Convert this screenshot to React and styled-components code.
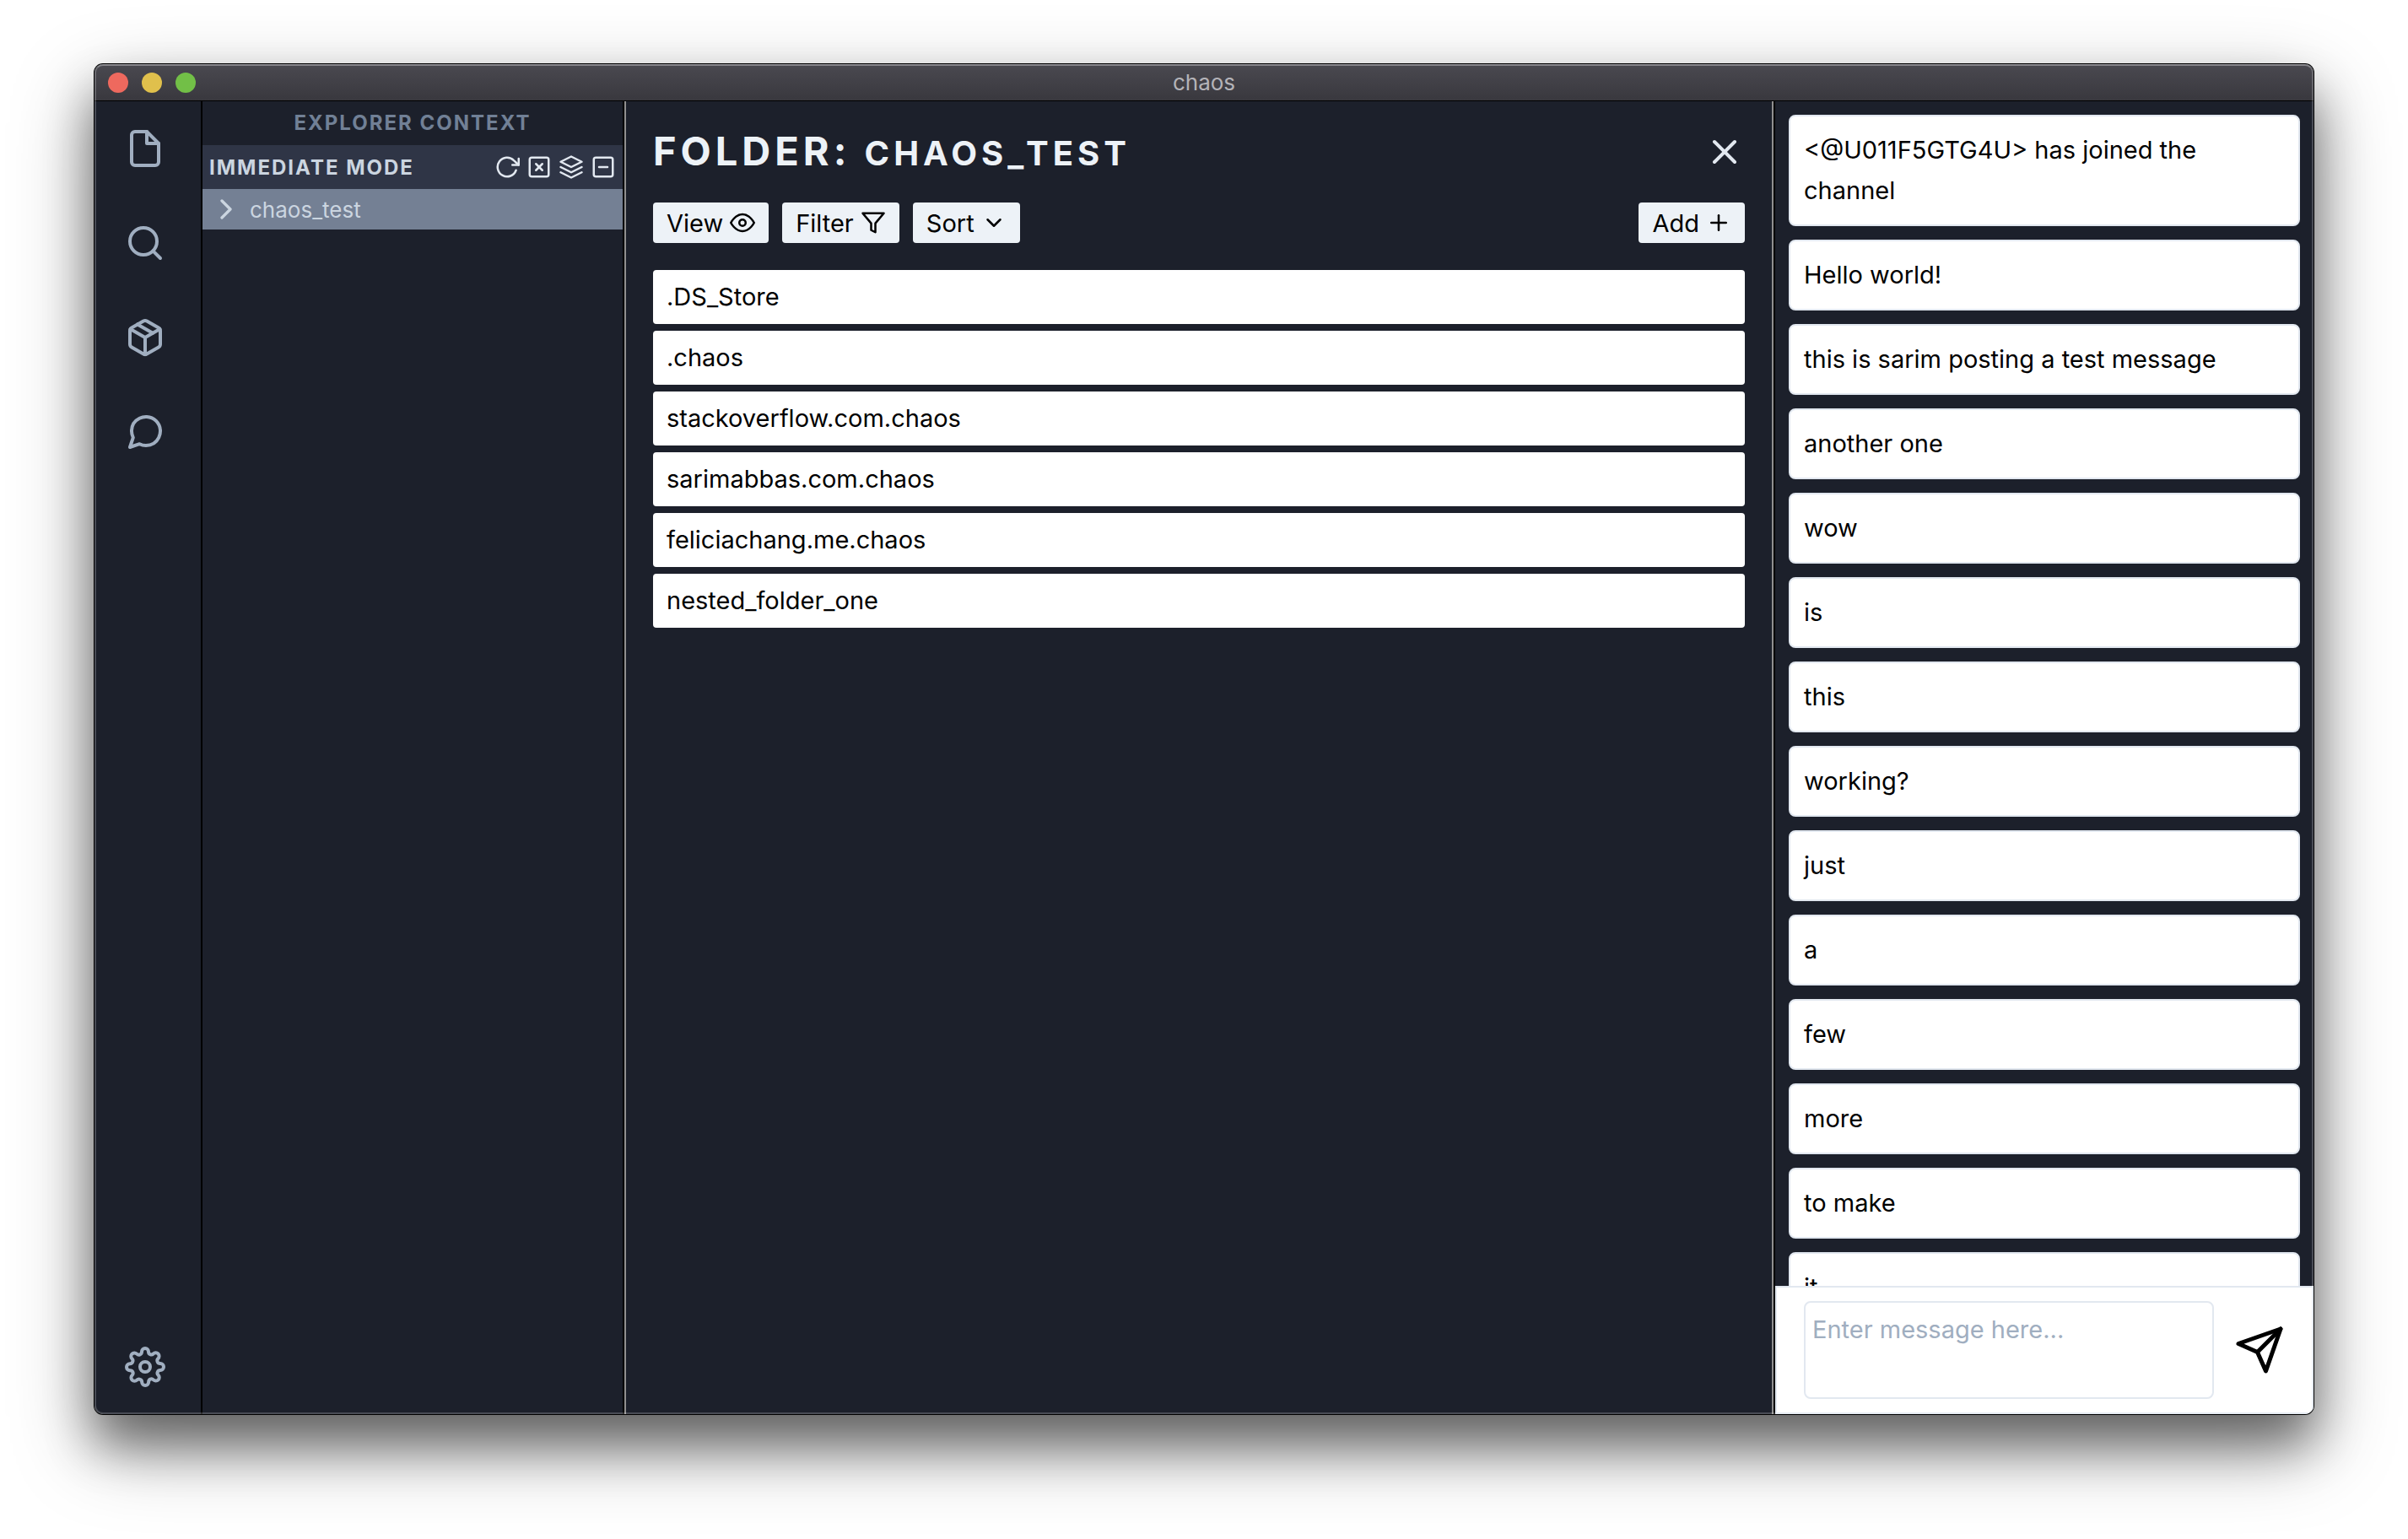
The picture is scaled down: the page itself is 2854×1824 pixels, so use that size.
import React from 'react';
import styled, { createGlobalStyle } from 'styled-components';
import {
  FiFile, FiSearch, FiPackage, FiMessageCircle, FiSettings, FiX, FiSend, FiRotateCw,
  FiXSquare, FiLayers, FiMinusSquare, FiChevronRight, FiChevronDown, FiEye, FiFilter, FiPlus,
} from 'react-icons/fi';

const Global = createGlobalStyle`
  *, *::before, *::after { box-sizing: border-box; }
  body { margin: 0; background: #fff; font-family: Inter, "Liberation Sans", sans-serif; }
  button, textarea { font: inherit; }
  button { border: 0; background: none; padding: 0; color: inherit; cursor: pointer; }
  h1, h2, p, ul { margin: 0; padding: 0; }
  ul { list-style: none; }
  svg { display: block; flex: none; }
`;

const Desktop = styled.div`
  height: 100vh;
  padding: 76px 112px 148px;
  overflow: hidden;
`;

const Shadow = styled.div`
  height: 100%;
  border-radius: 10px;
  box-shadow: 0 0 0 1px #000, 0 36px 56px rgba(0, 0, 0, 0.42), 0 36px 96px rgba(0, 0, 0, 0.38);
`;

const Window = styled.div`
  position: relative;
  height: 100%;
  display: flex;
  flex-direction: column;
  border-radius: 10px;
  overflow: hidden;
  background: #1c202b;
`;

const Rim = styled.div`
  position: absolute;
  inset: 0;
  border: 2px solid rgba(255, 255, 255, 0.2);
  border-top-color: rgba(255, 255, 255, 0.35);
  border-radius: 10px;
  pointer-events: none;
`;

const TitleBar = styled.header`
  display: grid;
  grid-template-columns: 1fr auto 1fr;
  align-items: center;
  height: 44px;
  flex: none;
  padding: 0 16px;
  border-bottom: 1px solid #000;
  background: linear-gradient(#4a4950, #39383e);
  color: #b4b3b8;
  font-size: 26px;
`;

const Lights = styled.div`
  display: flex;
  gap: 16px;
`;

const Light = styled.button`
  width: 24px;
  height: 24px;
  border-radius: 50%;
  background: ${(p) => p.$color};
`;

const Body = styled.div`
  flex: 1;
  min-height: 0;
  display: flex;
`;

const Rail = styled.nav`
  width: 128px;
  flex: none;
  display: flex;
  flex-direction: column;
  align-items: flex-start;
  gap: 64px;
  padding: 32px 36px;
  border-right: 2px solid #000;
  color: #a0aec0;
  font-size: 48px;
`;

const RailButton = styled.button`
  height: 48px;
  margin-top: ${(p) => (p.$last ? 'auto' : '0')};
`;

const Explorer = styled.aside`
  width: 500px;
  flex: none;
  border-right: 2px solid #000;
`;

const ExplorerTitle = styled.h2`
  line-height: 52px;
  text-align: center;
  color: #718096;
  font-size: 24px;
  font-weight: 700;
  letter-spacing: 2px;
`;

const SectionBar = styled.div`
  display: flex;
  align-items: center;
  justify-content: space-between;
  height: 52px;
  padding: 0 8px;
  background: #2f3546;
  color: #cbd5e0;
`;

const SectionTitle = styled.h2`
  font-size: 24px;
  font-weight: 700;
  letter-spacing: 2px;
`;

const Actions = styled.div`
  display: flex;
  gap: 8px;
  color: #e2e8f0;
  font-size: 30px;
`;

const TreeRow = styled.button`
  display: flex;
  align-items: center;
  gap: 8px;
  width: 100%;
  height: 48px;
  padding: 0 8px;
  background: #748094;
  color: #cbd5e0;
  font-size: 26px;
`;

const Main = styled.main`
  flex: 1;
  min-width: 0;
  padding: 32px;
  border-left: 2px solid #908f8f;
  border-right: 2px solid #908f8f;
`;

const Heading = styled.div`
  display: flex;
  align-items: center;
  justify-content: space-between;
  height: 56px;
  color: #edf2f7;
`;

const FolderTitle = styled.h1`
  font-size: 47px;
  font-weight: 700;
  line-height: 56px;
  letter-spacing: 5px;
`;

const FolderName = styled.span`
  font-size: 40px;
`;

const CloseButton = styled.button`
  color: #e2e8f0;
  font-size: 48px;
`;

const Toolbar = styled.div`
  display: flex;
  gap: 16px;
  padding: 32px 0;
`;

const ToolButton = styled.button`
  display: flex;
  align-items: center;
  gap: 8px;
  height: 48px;
  padding: 0 16px;
  border-radius: 4px;
  background: #edf2f7;
  color: #000;
  font-size: 29px;
  margin-left: ${(p) => (p.$end ? 'auto' : '0')};

  svg {
    width: 30px;
    height: 30px;
  }
`;

const FileList = styled.ul`
  display: flex;
  flex-direction: column;
  gap: 8px;
`;

const FileRow = styled.li`
  padding: 8px 16px;
  border-radius: 4px;
  background: #fff;
  color: #000;
  font-size: 29px;
  line-height: 48px;
`;

const Chat = styled.section`
  width: 640px;
  flex: none;
  display: flex;
  flex-direction: column;
  border-left: 2px solid #000;
`;

const Messages = styled.ul`
  flex: 1;
  min-height: 0;
  overflow: hidden;
  display: flex;
  flex-direction: column;
  gap: 16px;
  padding: 16px;
`;

const Message = styled.li`
  flex: none;
  padding: 16px;
  border: 2px solid #e2e8f0;
  border-radius: 8px;
  background: #fff;
  color: #000;
  font-size: 29px;
  line-height: 48px;
`;

const Composer = styled.form`
  display: flex;
  flex: none;
  height: 152px;
  padding: 16px 32px;
  gap: 24px;
  border: 2px solid #e2e8f0;
  background: #fff;
`;

const MessageBox = styled.textarea`
  flex: 1;
  min-width: 0;
  padding: 8px;
  border: 2px solid #e2e8f0;
  border-radius: 8px;
  resize: none;
  background: #fff;
  color: #000;
  font-size: 29px;
  line-height: 48px;
  &::placeholder { color: #a0aec0; opacity: 1; }
`;

const SendButton = styled.button`
  color: #000;
  font-size: 60px;
`;

const files = ['.DS_Store', '.chaos', 'stackoverflow.com.chaos', 'sarimabbas.com.chaos', 'feliciachang.me.chaos', 'nested_folder_one'];

const messages = [
  '<@U011F5GTG4U> has joined the channel', 'Hello world!', 'this is sarim posting a test message',
  'another one', 'wow', 'is', 'this', 'working?', 'just', 'a', 'few', 'more', 'to make', 'it',
];

export default function App() {
  return (
    <Desktop>
      <Global />
      <Shadow>
        <Window>
          <TitleBar>
            <Lights>
              <Light $color="#ee695e" aria-label="Close window" />
              <Light $color="#e0c04c" aria-label="Minimize window" />
              <Light $color="#72bf47" aria-label="Zoom window" />
            </Lights>
            <span>chaos</span>
          </TitleBar>
          <Body>
            <Rail>
              <RailButton aria-label="Files"><FiFile /></RailButton>
              <RailButton aria-label="Search"><FiSearch /></RailButton>
              <RailButton aria-label="Packages"><FiPackage /></RailButton>
              <RailButton aria-label="Chat"><FiMessageCircle /></RailButton>
              <RailButton $last aria-label="Settings"><FiSettings /></RailButton>
            </Rail>
            <Explorer>
              <ExplorerTitle>EXPLORER CONTEXT</ExplorerTitle>
              <SectionBar>
                <SectionTitle>IMMEDIATE MODE</SectionTitle>
                <Actions>
                  <button aria-label="Refresh"><FiRotateCw /></button>
                  <button aria-label="Close all"><FiXSquare /></button>
                  <button aria-label="Layers"><FiLayers /></button>
                  <button aria-label="Collapse"><FiMinusSquare /></button>
                </Actions>
              </SectionBar>
              <TreeRow><FiChevronRight size={40} />chaos_test</TreeRow>
            </Explorer>
            <Main>
              <Heading>
                <FolderTitle>FOLDER: <FolderName>CHAOS_TEST</FolderName></FolderTitle>
                <CloseButton aria-label="Close folder"><FiX /></CloseButton>
              </Heading>
              <Toolbar>
                <ToolButton>View <FiEye /></ToolButton>
                <ToolButton>Filter <FiFilter /></ToolButton>
                <ToolButton>Sort <FiChevronDown /></ToolButton>
                <ToolButton $end>Add <FiPlus /></ToolButton>
              </Toolbar>
              <FileList>
                {files.map((name) => <FileRow key={name}>{name}</FileRow>)}
              </FileList>
            </Main>
            <Chat>
              <Messages>
                {messages.map((text) => <Message key={text}>{text}</Message>)}
              </Messages>
              <Composer>
                <MessageBox aria-label="Message" placeholder="Enter message here..." />
                <SendButton type="button" aria-label="Send"><FiSend /></SendButton>
              </Composer>
            </Chat>
          </Body>
          <Rim />
        </Window>
      </Shadow>
    </Desktop>
  );
}
